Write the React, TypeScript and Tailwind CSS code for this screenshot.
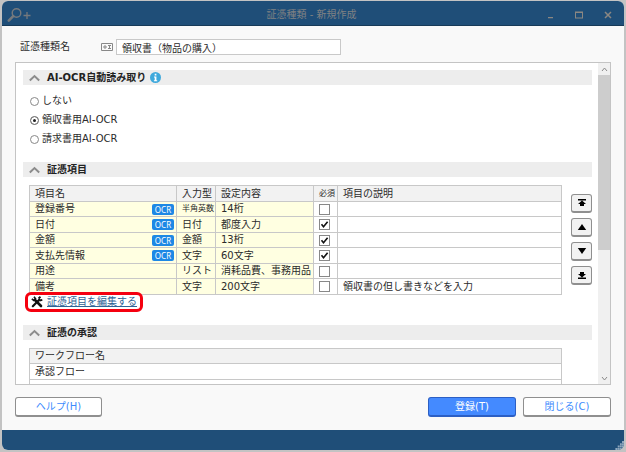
import React, { useState } from 'react';

const items = [
    { name: '登録番号', ocr: true, type: '半角英数', small: true, setting: '14桁', required: false, note: '' },
    { name: '日付', ocr: true, type: '日付', setting: '都度入力', required: true, note: '' },
    { name: '金額', ocr: true, type: '金額', setting: '13桁', required: true, note: '' },
    { name: '支払先情報', ocr: true, type: '文字', setting: '60文字', required: true, note: '' },
    { name: '用途', ocr: false, type: 'リスト', setting: '消耗品費、事務用品', required: false, note: '' },
    { name: '備考', ocr: false, type: '文字', setting: '200文字', required: false, note: '領収書の但し書きなどを入力' },
];

const ocrModes = ['しない', '領収書用AI-OCR', '請求書用AI-OCR'];

// Arrow glyphs for the reorder buttons, drawn on a 10x8 grid
const moves = [
    { label: '先頭へ移動', d: 'M1 0h8v1.5H1zM5 1.5L9 5H7v2H3V5H1z' },
    { label: '上へ移動', d: 'M5 1l4.2 6H.8z' },
    { label: '下へ移動', d: 'M5 7L.8 1h8.4z' },
    { label: '末尾へ移動', d: 'M1 6.5h8V8H1zM5 6.5L9 3H7V1H3v2H1z' },
];

const SectionHeader: React.FC<{ title: string; info?: boolean }> = ({ title, info }) => (
    <div className="flex items-center h-[15px] pl-[6px] bg-[#ededed]">
        <svg className="w-[11px] h-2" viewBox="0 0 11 8" fill="none" stroke="#8c8c8c" strokeWidth="2">
            <path d="M.8 6.4L5.5 2l4.7 4.4" />
        </svg>
        <h2 className="ml-[7px] font-bold text-[#222]">{title}</h2>
        {info && (
            <button aria-label="説明" className="ml-1">
                <svg className="w-[11px] h-[11px]" viewBox="0 0 11 11">
                    <circle cx="5.5" cy="5.5" r="5.5" fill="#3fa9dc" />
                    <path d="M4.7 1.8h1.7v1.6H4.7zM4 4.4h2.4v3.8h.8v1H3.9v-1h.8V5.4H4z" fill="#fff" />
                </svg>
            </button>
        )}
    </div>
);

const Scrollbar: React.FC = () => (
    <div className="flex flex-col w-3 shrink-0 bg-[#f0f0f0]">
        <button aria-label="上にスクロール" className="flex h-3 items-center justify-center">
            <svg className="w-[7px] h-[5px]" viewBox="0 0 7 5" fill="none" stroke="#8a8a8a"><path d="M1 4l2.5-3L6 4" /></svg>
        </button>
        <div className="flex-1">
            <div className="h-[59%] bg-[#cdcdcd]" />
        </div>
        <button aria-label="下にスクロール" className="flex h-3 items-center justify-center">
            <svg className="w-[7px] h-[5px]" viewBox="0 0 7 5" fill="none" stroke="#8a8a8a"><path d="M1 1l2.5 3L6 1" /></svg>
        </button>
    </div>
);

const App: React.FC = () => {
    const [mode, setMode] = useState(1);
    const [name, setName] = useState('領収書（物品の購入）');
    const [required, setRequired] = useState(items.map((item) => item.required));

    const toggle = (index: number) => {
        setRequired(required.map((value, i) => (i === index ? !value : value)));
    };

    return (
        <div className="h-screen pt-px pb-0.5 px-0.5 bg-[#c3c3c3] text-[10px] leading-[14px] text-[#2b2b2b] font-['DejaVu_Sans','Noto_Sans_CJK_JP',sans-serif]">
            <div className="flex flex-col h-full rounded-md overflow-hidden bg-[#f9f9f9]">
                {/* Title bar */}
                <header className="grid grid-cols-[1fr_auto_1fr] items-center h-[25px] shrink-0 pt-[3px] pl-[5px] pr-3 border-b border-[#173a58] bg-[#1f4e78] text-[#7f8183]">
                    <svg className="w-6 h-4" viewBox="0 0 24 16" fill="none" stroke="#75797d">
                        <circle cx="9.5" cy="6" r="4.3" strokeWidth="1.4" />
                        <path d="M6.2 9.2L1.8 13.6" strokeWidth="2.6" strokeLinecap="round" />
                        <path d="M16.5 8.5h7M20 5v7" strokeWidth="1.3" />
                    </svg>
                    <h1 className="pl-1">証憑種類 - 新規作成</h1>
                    <div className="flex justify-end gap-[21px] text-[#8b8782]">
                        <button aria-label="最小化"><svg className="w-2 h-2" viewBox="0 0 8 8"><path d="M2 6h5v1.2H2z" fill="currentColor" /></svg></button>
                        <button aria-label="最大化"><svg className="w-2 h-2" viewBox="0 0 8 8"><path d="M0 .5h8v7H0zM1 2v4.5h6V2z" fill="currentColor" fillRule="evenodd" /></svg></button>
                        <button aria-label="ウィンドウを閉じる"><svg className="w-2 h-2" viewBox="0 0 8 8" stroke="currentColor" strokeWidth="1.5"><path d="M1 1l6 6M7 1L1 7" /></svg></button>
                    </div>
                </header>

                <main className="flex flex-col flex-1 min-h-0 px-[13px] pt-[13px]">
                    {/* Name */}
                    <div className="flex items-center h-4 pl-[5px]">
                        <label htmlFor="name" className="w-[81px]">証憑種類名</label>
                        <svg className="w-3 h-2 mr-[3px]" viewBox="0 0 12 8" fill="none" stroke="#888">
                            <path d="M.5 .5h11v7H.5z" />
                            <path d="M3 3h2v2H3zM7 2.5h3M7 5.5h3M8.500 2.500v3" />
                        </svg>
                        <input
                            id="name"
                            value={name}
                            onChange={(e) => setName(e.target.value)}
                            className="w-[225px] h-4 px-[5px] border border-[#c9c9c9] bg-white outline-none"
                        />
                    </div>

                    <div className="flex flex-1 min-h-0 mt-[7px] border border-[#c4c4c4] bg-white overflow-hidden">
                        <div className="flex-1 min-w-0 overflow-hidden pl-[7px] pr-1.5 pt-[7px]">
                            <SectionHeader title="AI-OCR自動読み取り" info />
                            <div className="flex flex-col gap-[5px] pt-[9px] pl-[7px]">
                                {ocrModes.map((label, i) => (
                                    <label key={label} className="flex items-center gap-[3px]">
                                        <input
                                            type="radio"
                                            name="ocr"
                                            checked={mode === i}
                                            onChange={() => setMode(i)}
                                            className="appearance-none w-[9px] h-[9px] rounded-full border border-[#888] bg-white checked:bg-[#222] checked:shadow-[inset_0_0_0_2px_#fff]"
                                        />
                                        {label}
                                    </label>
                                ))}
                            </div>

                            <div className="mt-4">
                                <SectionHeader title="証憑項目" />
                            </div>
                            <div className="flex pl-[6px] pt-2">
                                <table className="flex-1 table-fixed border-separate border-spacing-0 border-t border-l border-[#c8c8c8] [&_th]:font-normal [&_th]:text-left [&_th]:bg-[#f2f2f2] [&_th]:border-r [&_th]:border-b [&_td]:border-r [&_td]:border-b [&_th]:border-[#c8c8c8] [&_td]:border-[#c8c8c8] [&_th]:p-0 [&_td]:p-0 [&_th]:pl-[5px] [&_td]:pl-[5px] whitespace-nowrap">
                                    <colgroup>
                                        <col className="w-[147px]" />
                                        <col className="w-[39px]" />
                                        <col className="w-[98px]" />
                                        <col className="w-[24px]" />
                                        <col />
                                    </colgroup>
                                    <thead>
                                        <tr className="h-4">
                                            <th>項目名</th>
                                            <th>入力型</th>
                                            <th>設定内容</th>
                                            <th><span className="block text-[8px]">必須</span></th>
                                            <th>項目の説明</th>
                                        </tr>
                                    </thead>
                                    <tbody>
                                        {items.map((item, i) => (
                                            <tr key={item.name} className="odd:h-[15px] even:h-4">
                                                <td className="bg-[#ffffe1]">
                                                    <div className="flex items-center justify-between pr-0.5">
                                                        {item.name}
                                                        {item.ocr && <span className="w-[22px] h-[11px] rounded-xs bg-[#1e88e5] text-white text-[8px] leading-[11px] text-center font-['Noto_Sans',sans-serif]">OCR</span>}
                                                    </div>
                                                </td>
                                                <td className="bg-[#ffffe1]">{item.small ? <span className="block text-[8px]">{item.type}</span> : item.type}</td>
                                                <td className="bg-[#ffffe1] overflow-hidden">{item.setting}</td>
                                                <td>
                                                    <span className="relative block w-[11px] h-[11px]">
                                                        <input
                                                            type="checkbox"
                                                            aria-label={`${item.name} 必須`}
                                                            checked={required[i]}
                                                            onChange={() => toggle(i)}
                                                            className="block appearance-none w-[11px] h-[11px] border border-[#888] bg-white"
                                                        />
                                                        {required[i] && (
                                                            <svg className="absolute inset-0 pointer-events-none" viewBox="0 0 11 11" fill="none" stroke="#111" strokeWidth="1.6">
                                                                <path d="M2.500 5.300l2 2.500L8.600 2.800" />
                                                            </svg>
                                                        )}
                                                    </span>
                                                </td>
                                                <td>{item.note}</td>
                                            </tr>
                                        ))}
                                    </tbody>
                                </table>
                                <div className="flex flex-col gap-[5px] w-[30px] pt-[9px] pl-[9px] shrink-0">
                                    {moves.map((move) => (
                                        <button key={move.label} aria-label={move.label} className="flex items-center justify-center w-[21px] h-[19px] rounded-[3px] border border-b-2 border-[#8f8f8f] bg-[#f2f2f2]">
                                            <svg className="w-[10px] h-2" viewBox="0 0 10 8"><path d={move.d} /></svg>
                                        </button>
                                    ))}
                                </div>
                            </div>

                            <div className="flex pl-2">
                                <a href="#edit" className="relative flex items-center gap-1 text-[#2f6496]">
                                    <svg className="w-3 h-3" viewBox="0 0 12 12" fill="none" stroke="#111">
                                        <path d="M4 4l6 6" strokeWidth="2.600" strokeLinecap="round" />
                                        <path d="M.8 2.800l2 1.600 1.700-1.700L3 .8" strokeWidth="1.600" />
                                        <path d="M1.800 10.200L8 4" strokeWidth="2.200" strokeLinecap="round" />
                                        <path d="M7.500 2.500l2-1.700M7.800 3.200l1.200 1.200 2.300-.6" strokeWidth="1.800" />
                                    </svg>
                                    <span className="underline">証憑項目を編集する</span>
                                    <span className="absolute -inset-x-1.5 -inset-y-[3px] rounded-md border-3 border-[#f5000f]" />
                                </a>
                            </div>

                            <div className="mt-4">
                                <SectionHeader title="証憑の承認" />
                            </div>
                            <div className="pl-[6px] pr-[30px] pt-2">
                                <table className="w-full border-separate border-spacing-0 border-t border-l border-[#c8c8c8]">
                                    <thead>
                                        <tr className="h-[15px]"><th className="p-0 pl-[5px] text-left font-normal bg-[#f2f2f2] border-r border-b border-[#c8c8c8]">ワークフロー名</th></tr>
                                    </thead>
                                    <tbody>
                                        <tr className="h-4"><td className="p-0 pl-[5px] border-r border-b border-[#c8c8c8]">承認フロー</td></tr>
                                        <tr className="h-4"><td className="p-0 border-r border-b border-[#c8c8c8]" /></tr>
                                    </tbody>
                                </table>
                            </div>
                        </div>
                        <Scrollbar />
                    </div>

                    {/* Actions */}
                    <div className="flex shrink-0 gap-[7px] pt-3 pb-[13px]">
                        <button className="w-[87px] h-5 mr-auto rounded-[3px] border border-b-2 border-[#8f8f8f] bg-white text-[#3d8bfd]">ヘルプ(H)</button>
                        <button className="w-[88px] h-5 rounded-[3px] border border-b-2 border-[#2c5fc4] bg-[#448aff] text-white">登録(T)</button>
                        <button className="w-[88px] h-5 rounded-[3px] border border-b-2 border-[#8f8f8f] bg-white text-[#3d8bfd]">閉じる(C)</button>
                    </div>
                </main>

                <footer className="flex items-end justify-end h-5 shrink-0 bg-[#1f4e78]">
                    <svg className="w-[9px] h-[9px]" viewBox="0 0 9 9" fill="#8fa7bd">
                        <path d="M7 0h2v2H7zM5 2.300h1.800v2H5zM7 2.300h2v2H7zM2.700 4.600h2v2h-2zM5 4.600h1.800v2H5zM7 4.600h2v2H7zM.4 7h2v2h-2zM2.700 7h2v2h-2zM5 7h1.800v2H5zM7 7h2v2H7z" />
                    </svg>
                </footer>
            </div>
        </div>
    );
};

export default App;
